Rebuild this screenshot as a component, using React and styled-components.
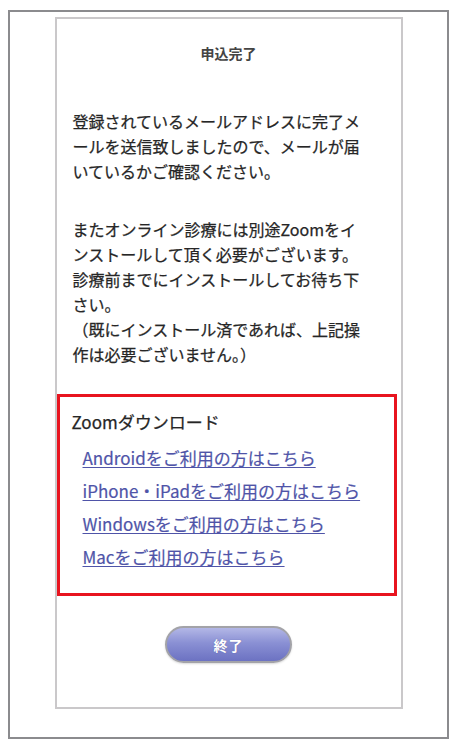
import React from 'react';
import styled, { createGlobalStyle } from 'styled-components';

const GlobalStyle = createGlobalStyle`
  html, body {
    margin: 0;
    padding: 0;
    background: #ffffff;
  }
  body {
    font-family: "Noto Sans CJK JP", "Liberation Sans", sans-serif;
    color: #333333;
  }
`

const Frame = styled.div`
  box-sizing: border-box;
  width: 441px;
  height: 729px;
  margin: 10px 0 0 8px;
  border: 2px solid #8b8b8e;
  display: flex;
  justify-content: center;
  padding-top: 5px;
`
const Panel = styled.div`
  box-sizing: border-box;
  width: 348px;
  height: 692px;
  border: 2px solid #cac8ca;
  display: flex;
  flex-direction: column;
`
const Title = styled.h1`
  margin: 24px 0 0;
  font-size: 14px;
  line-height: 20px;
  font-weight: 700;
  color: #444444;
  text-align: center;
`
const Body = styled.div`
  margin-top: 46px;
  padding: 0 16px;
`
const Para = styled.p`
  margin: 0 0 ${(p) => p.$gap || 0}px;
  font-size: 16px;
  line-height: 25px;
  color: #262626;
  -webkit-text-stroke: 0.25px #262626;
  white-space: nowrap;
`
const DownloadBox = styled.div`
  box-sizing: border-box;
  width: 340px;
  margin-top: 27px;
  border: 3px solid #e8141f;
  padding: 13px 12px 24px;
`
const BoxTitle = styled.div`
  font-size: 17px;
  line-height: 24px;
  color: #262626;
  -webkit-text-stroke: 0.25px #262626;
`
const LinkList = styled.ul`
  list-style: none;
  margin: 11px 0 0;
  padding: 0 0 0 11px;
  display: flex;
  flex-direction: column;
  gap: 8px;
`
const StoreLink = styled.a`
  font-size: 17px;
  line-height: 25px;
  color: #4f54a8;
  -webkit-text-stroke: 0.2px #4f54a8;
  text-decoration: underline;
  text-underline-offset: 2px;
`
const ButtonRow = styled.div`
  display: flex;
  justify-content: center;
  margin-top: 30px;
`
const EndButton = styled.button`
  box-sizing: border-box;
  width: 127px;
  height: 37px;
  border-radius: 19px;
  border: 2px solid #a3a3a8;
  background: linear-gradient(to bottom, #b3b7e6 0%, #8a90d4 45%, #6c72c2 100%);
  color: #ffffff;
  font-family: "Noto Sans CJK JP", sans-serif;
  font-size: 14px;
  font-weight: 700;
  letter-spacing: 1px;
  text-shadow: 0 0 1px rgba(60, 60, 120, 0.6);
  box-shadow: 0 1px 2px rgba(0, 0, 0, 0.15);
  cursor: pointer;
`

const links = [
  'Androidをご利用の方はこちら',
  'iPhone・iPadをご利用の方はこちら',
  'Windowsをご利用の方はこちら',
  'Macをご利用の方はこちら',
]

export default function App() {
  return (
    <>
      <GlobalStyle />
      <Frame>
        <Panel>
          <Title>申込完了</Title>
          <Body>
            <Para $gap={33}>
              登録されているメールアドレスに完了メ<br />
              ールを送信致しましたので、メールが届<br />
              いているかご確認ください。
            </Para>
            <Para>
              またオンライン診療には別途Zoomをイ<br />
              ンストールして頂く必要がございます。<br />
              診療前までにインストールしてお待ち下<br />
              さい。<br />
              （既にインストール済であれば、上記操<br />
              作は必要ございません。）
            </Para>
          </Body>
          <DownloadBox>
            <BoxTitle>Zoomダウンロード</BoxTitle>
            <LinkList>
              {links.map((t) => (
                <li key={t}>
                  <StoreLink href="#">{t}</StoreLink>
                </li>
              ))}
            </LinkList>
          </DownloadBox>
          <ButtonRow>
            <EndButton>終了</EndButton>
          </ButtonRow>
        </Panel>
      </Frame>
    </>
  )
}
